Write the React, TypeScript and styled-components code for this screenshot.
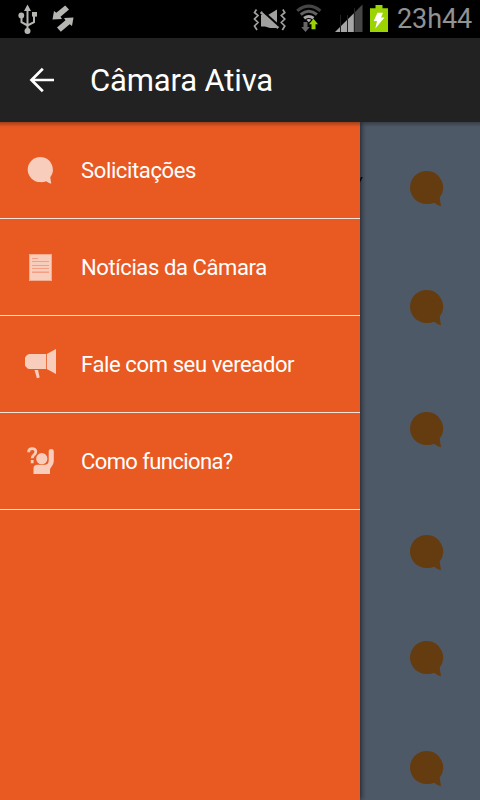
import React from "react";
import styled, { createGlobalStyle } from "styled-components";

const GlobalStyle = createGlobalStyle`
  *, *::before, *::after { box-sizing: border-box; }
  body { margin: 0; background: #4e5967; font-family: Roboto, "Liberation Sans", sans-serif; }
`;

const Screen = styled.div`
  width: 480px;
  height: 800px;
  overflow: hidden;
  display: flex;
  flex-direction: column;
  background: #4e5967;
`;

const StatusBar = styled.header`
  flex: none;
  height: 38px;
  padding-right: 9px;
  padding-left: 16px;
  display: flex;
  align-items: center;
  justify-content: space-between;
  background: #000;
`;

const StatusGroup = styled.div<{ $gap: number }>`
  display: flex;
  align-items: center;
  gap: ${(p) => p.$gap}px;
`;

const Glyph = styled.svg`
  display: block;
  flex: none;
`;

const Clock = styled.time`
  width: 75px;
  margin-left: -4px;
  margin-right: -1px;
  font-size: 27px;
  line-height: 38px;
  letter-spacing: -0.1px;
  white-space: nowrap;
  color: #929292;
`;

const AppBar = styled.div`
  flex: none;
  height: 84px;
  padding-left: 28px;
  display: flex;
  align-items: center;
  gap: 34px;
  background: #222;
`;

const BackButton = styled.button`
  border: 0;
  padding: 0;
  background: none;
`;

const Title = styled.h1`
  margin: 0;
  padding-top: 1px;
  font-size: 31px;
  font-weight: 400;
  line-height: 40px;
  letter-spacing: -0.15px;
  white-space: nowrap;
  color: #fff;
`;

const Content = styled.main`
  position: relative;
  flex: 1;
  min-height: 0;
  overflow: hidden;

  &::after {
    content: "";
    position: absolute;
    inset: 0 0 auto;
    height: 5px;
    background: linear-gradient(rgba(0, 0, 0, 0.3), rgba(0, 0, 0, 0));
  }
`;

const RequestList = styled.ul`
  margin: 0;
  padding: 49px 36px 0 0;
  list-style: none;
`;

const Request = styled.li<{ $height: number }>`
  height: ${(p) => p.$height}px;
  display: flex;
  align-items: flex-start;
  justify-content: flex-end;
  gap: 48px;
`;

const RequestText = styled.span`
  font-size: 16px;
  font-style: italic;
  line-height: 20px;
  color: #000;
`;

const Drawer = styled.nav`
  position: absolute;
  inset: 0 auto 0 0;
  width: 360px;
  background: #e95a22;
  box-shadow: 1px 0 6px rgba(0, 0, 0, 0.65);
`;

const MenuItem = styled.a`
  height: 97px;
  padding-left: 24px;
  display: flex;
  align-items: center;
  gap: 24px;
  border-bottom: 1px solid #f7e3da;
  color: #fff;
`;

const MenuLabel = styled.span<{ $tracking: number }>`
  padding-top: 1px;
  font-size: 22px;
  line-height: 28px;
  letter-spacing: ${(p) => p.$tracking}px;
  white-space: nowrap;
`;

const PALE = "#f8cdbc";

const UsbIcon = () => (
  <Glyph width="24" height="38" viewBox="16 0 24 38" fill="#b5b5b2">
    <path d="M27.5 4.5 31 11h-7z" />
    <circle cx="21.3" cy="15.5" r="2.9" />
    <rect x="32" y="12" width="5" height="4.6" />
    <circle cx="27.5" cy="31" r="3" />
    <path d="M27.5 9v21M21.5 16v6.2l6 3.3M34 15v7.2l-6.5 3.3" fill="none" stroke="#b5b5b2" strokeWidth="2" />
  </Glyph>
);

const TransferIcon = () => (
  <Glyph width="24" height="38" viewBox="51 0 24 38" fill="#b5b5b2">
    <path d="M52.5 19.5 54 11 56.3 12.8 65.2 5.5 69 9.500 60.500 16.800 62 19z" />
    <path d="M73.500 17.500 72 26 69.700 24.200 60.800 31.800 57 27.500 65.500 20.200 64 18z" />
  </Glyph>
);

const VibrateMuteIcon = () => (
  <Glyph width="34" height="38" viewBox="253 0 34 38">
    <path
      d="m256.5 9.5-2 3 3.5 3-3.5 3.5 3.5 3.5-3.5 3.5 2.5 4M282.8 9.5l2 3-3.5 3 3.5 3.5-3.5 3.5 3.5 3.5-2.5 4"
      fill="none"
      stroke="#a0a09f"
      strokeWidth="1.7"
    />
    <path d="M261 15h7l9-5.5v18.5H270l-5-1.5h-4z" fill="#a0a09f" />
    <path d="m260.800 12 17.500 16" stroke="#a0a09f" strokeWidth="2.8" />
    <path d="m263 11.300 16 14.500" stroke="#000" strokeWidth="2" />
  </Glyph>
);

const WifiIcon = () => (
  <Glyph width="26" height="38" viewBox="296 0 26 38">
    <g fill="none" strokeWidth="3">
      <path d="M297.2 10.8Q308.8 1.4 320.4 10.8" stroke="#454545" />
      <path d="M300.7 14.5Q308.8 8 316.9 14.5" stroke="#626262" />
      <path d="M304.1 18.3Q308.8 14.6 313.5 18.3" stroke="#a8a8a8" />
    </g>
    <path d="M306.3 19.8Q308.8 18.2 311.3 19.8L308.8 22.2z" fill="#b5b5b5" />
    <path d="M303.5 22h4v5h2.3l-4.3 5-4.3-5h2.3z" fill="#666" />
    <path d="M311.5 29.2v-5H309l4.5-5.4 4.5 5.4h-2.5v5z" fill="#9bd400" />
  </Glyph>
);

const SignalIcon = () => (
  <Glyph width="28" height="38" viewBox="335 0 28 38">
    <path d="M335 32 353.8 13.2V32z" fill="#a6a6a6" />
    <path d="M354.8 12.2 362.5 4.5V32h-7.700z" fill="#464646" />
    <path d="M340.5 15v17M347.500 15v17M354.500 8v24" stroke="#222" strokeWidth="1" />
  </Glyph>
);

const BatteryIcon = () => (
  <Glyph width="18" height="38" viewBox="370 0 18 38">
    <path d="M375.5 5h7v3.3h5.5V32h-18V8.3h5.5z" fill="#9bd400" />
    <path d="M377.5 12.8h5.5l-2 4.7h3.5L375.3 28.500l1.700-7.500h-3.300z" fill="#fff" />
  </Glyph>
);

const BackIcon = () => (
  <Glyph width="28" height="26" viewBox="28 67 28 26" fill="none" stroke="#fff" strokeWidth="2.7">
    <path d="M54 80H31.5M42.8 68.7 31.5 80l11.3 11.3" />
  </Glyph>
);

const BUBBLE =
  "M16.5 0A16.5 16.5 0 0 1 29.7 26.5L31 35.2Q28.5 35 24.3 31.8A16.5 16.5 0 0 1 16.5 33A16.5 16.5 0 0 1 16.5 0z";

const RequestBubble = () => (
  <Glyph width="34" height="36" viewBox="0 0 34 36">
    <path d={BUBBLE} fill="#643c10" />
  </Glyph>
);

const SolicitacoesIcon = () => (
  <Glyph width="33" height="34" viewBox="24 153 33 34">
    <path transform="translate(27.7 157) scale(.76)" d={BUBBLE} fill={PALE} />
  </Glyph>
);

const NoticiasIcon = () => (
  <Glyph width="33" height="34" viewBox="24 250 33 34">
    <path d="M29 254h23v27H29z" fill={PALE} />
    <path d="M29.5 254.5h22v26h-22z" fill="none" stroke="#f5ab8f" />
    <path d="M32 258.5h6M32 261.5h17M32 265.5h17M32 268.5h17M32 272.5h17" stroke="#f1a083" />
    <path d="M32 271.5h17" stroke="#f5b49c" />
  </Glyph>
);

const VereadorIcon = () => (
  <Glyph width="33" height="34" viewBox="24 347 33 34" fill={PALE}>
    <path d="M29 354h17v15H29q-1.5 0-4-3.5v-8q2-3.5 4-3.5z" />
    <path d="M46.8 354 56 349v25l-9.2-5z" />
    <path d="M34.5 370h3.5l1.7 7.5-2.8.7z" />
  </Glyph>
);

const FuncionaIcon = () => (
  <Glyph width="33" height="34" viewBox="24 444 33 34" fill={PALE}>
    <path
      d="M28.6 452.3c0-5 7.4-4.6 7.2-.5 0 3-3.6 3-3.6 6.5M32.2 460v3.2"
      fill="none"
      stroke={PALE}
      strokeWidth="2.8"
    />
    <circle cx="41.8" cy="458.7" r="5.6" />
    <path d="M33.5 474v-5.500q0-3.700 4-3.700h7.200q3.800 0 4-4.300V451q0-2 2.500-2t2.600 2v10q0 3.700-2.800 6.500L50 469v5z" />
  </Glyph>
);

const menu = [
  { label: "Solicitações", Icon: SolicitacoesIcon, tracking: -0.36 },
  { label: "Notícias da Câmara", Icon: NoticiasIcon, tracking: -0.4 },
  { label: "Fale com seu vereador", Icon: VereadorIcon, tracking: -0.38 },
  { label: "Como funciona?", Icon: FuncionaIcon, tracking: -0.6 },
];

const requests = [
  { height: 119, text: "y" },
  { height: 122 },
  { height: 123 },
  { height: 106 },
  { height: 110 },
  { height: 110 },
];

export default function App() {
  return (
    <>
      <GlobalStyle />
      <Screen>
        <StatusBar>
          <StatusGroup $gap={11}>
            <UsbIcon />
            <TransferIcon />
          </StatusGroup>
          <StatusGroup $gap={13}>
            <StatusGroup $gap={9}>
              <VibrateMuteIcon />
              <WifiIcon />
            </StatusGroup>
            <StatusGroup $gap={7}>
              <SignalIcon />
              <BatteryIcon />
            </StatusGroup>
            <Clock>23h44</Clock>
          </StatusGroup>
        </StatusBar>
        <AppBar>
          <BackButton aria-label="Voltar">
            <BackIcon />
          </BackButton>
          <Title>Câmara Ativa</Title>
        </AppBar>
        <Content>
          <RequestList>
            {requests.map((request, i) => (
              <Request key={i} $height={request.height}>
                {request.text && <RequestText>{request.text}</RequestText>}
                <RequestBubble />
              </Request>
            ))}
          </RequestList>
          <Drawer>
            {menu.map(({ label, Icon, tracking }) => (
              <MenuItem key={label}>
                <Icon />
                <MenuLabel $tracking={tracking}>{label}</MenuLabel>
              </MenuItem>
            ))}
          </Drawer>
        </Content>
      </Screen>
    </>
  );
}
